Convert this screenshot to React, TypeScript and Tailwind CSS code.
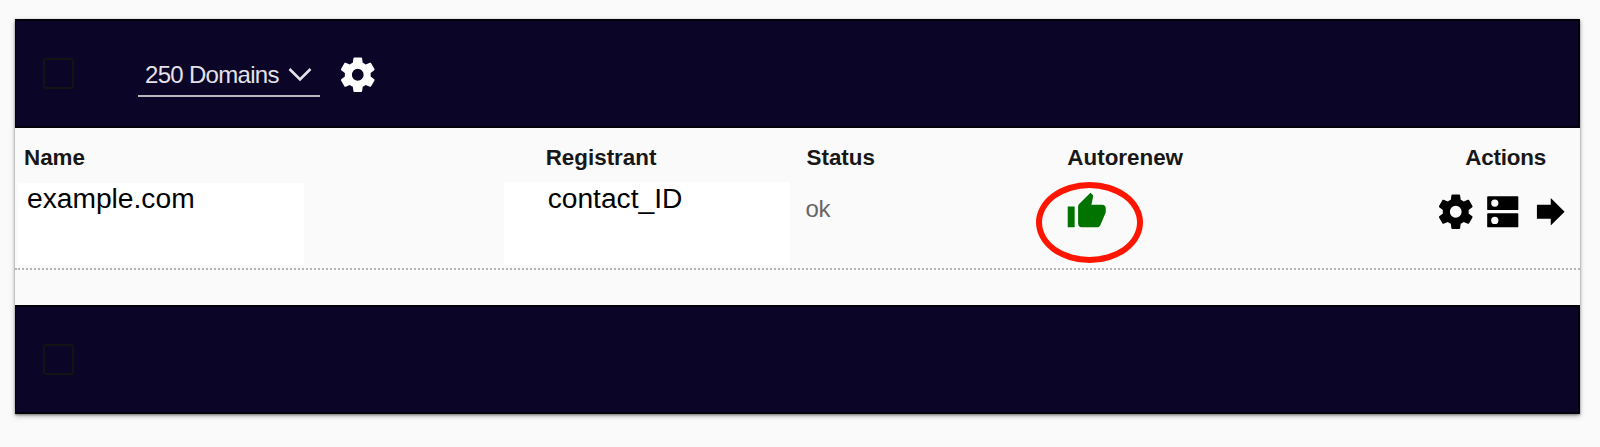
import { MdForward, MdThumbUp } from "react-icons/md";

function Cog({ className }: { className?: string }) {
  return (
    <svg className={className} viewBox="0 0 24 24" fill="currentColor">
      <path d="M12 15.4A3.4 3.4 0 0 1 8.6 12 3.4 3.4 0 0 1 12 8.6a3.4 3.4 0 0 1 3.4 3.4 3.4 3.4 0 0 1-3.4 3.4m7.43-2.43c.04-.32.07-.64.07-.97s-.03-.66-.07-1l2.11-1.63c.19-.15.24-.42.12-.64l-2-3.46c-.12-.22-.39-.31-.61-.22l-2.49 1c-.52-.39-1.06-.73-1.69-.98l-.37-2.65A.506.506 0 0 0 14 2h-4c-.25 0-.46.18-.5.42l-.37 2.65c-.63.25-1.17.59-1.69.98l-2.49-1c-.22-.09-.49 0-.61.22l-2 3.46c-.13.22-.07.49.12.64L4.57 11c-.04.34-.07.67-.07 1s.03.65.07.97l-2.11 1.66c-.19.15-.25.42-.12.64l2 3.46c.12.22.39.3.61.22l2.49-1.01c.52.4 1.06.74 1.69.99l.37 2.65c.04.24.25.42.5.42h4c.25 0 .46-.18.5-.42l.37-2.65c.63-.26 1.17-.59 1.69-.99l2.49 1.01c.22.08.49 0 .61-.22l2-3.46c.12-.22.07-.49-.12-.64z" />
    </svg>
  );
}

function Servers({ className }: { className?: string }) {
  return (
    <svg className={className} viewBox="0 0 24 24" fill="currentColor">
      <path d="M7.4 9.1a2.1 2.1 0 1 1 0-4.2 2.1 2.1 0 0 1 0 4.2M20.5 3h-17a.5.5 0 0 0-.5.5v7a.5.5 0 0 0 .5.5h17a.5.5 0 0 0 .5-.5v-7a.5.5 0 0 0-.5-.5M7.4 19.1a2.1 2.1 0 1 1 0-4.2 2.1 2.1 0 0 1 0 4.2M20.5 12.8h-17a.5.5 0 0 0-.5.5v7.2a.5.5 0 0 0 .5.5h17a.5.5 0 0 0 .5-.5v-7.2a.5.5 0 0 0-.5-.5" />
    </svg>
  );
}

function Toolbar({ children }: { children?: React.ReactNode }) {
  return (
    <div className="flex h-[109px] items-center border-2 border-l border-[#030109] bg-[#0b0528]">
      <div className="ml-[27px] h-[31px] w-[31px] rounded-[3px] border-2 border-[#131313]" />
      {children}
    </div>
  );
}

export default function App() {
  return (
    <div className="h-[447px] bg-[#fafafa] pt-[19px] pl-[15px] font-['Liberation_Sans',Arial,sans-serif] text-black">
      <div className="w-[1565px] shadow-[0_2px_5px_rgba(0,0,0,0.3),0_1px_2px_rgba(0,0,0,0.35)]">
        <Toolbar>
          <div className="mt-[3px] ml-[64px] flex h-11 w-[182px] items-center border-b-2 border-[#b9b7bb] pt-[2px] pl-[7px] text-[#e4e2e8]">
            <span className="w-[135px] text-2xl font-light tracking-[-0.7px] whitespace-nowrap">250 Domains</span>
            <svg className="ml-2 h-[14px] w-6" viewBox="0 0 24 14" fill="none" stroke="currentColor" strokeWidth="2.6">
              <path d="M1.5 1 12 11.5 22.5 1" />
            </svg>
          </div>
          <Cog className="mt-[2px] ml-[17px] size-[41.5px] text-white" />
        </Toolbar>

        <div className="h-[177px] bg-[#fafafa]">
          <div className="grid h-[54px] grid-cols-6 pt-[14px] text-[22.4px] leading-8 font-bold text-[#171717]">
            <div className="col-span-2 pl-[9px]">Name</div>
            <div className="pl-[9px]">Registrant</div>
            <div className="pl-[9px]">Status</div>
            <div className="pl-[9px]">Autorenew</div>
            <div className="pr-[34px] text-right tracking-[-0.2px]">Actions</div>
          </div>

          <div className="grid h-[88px] grid-cols-6 border-b-2 border-dotted border-[#b5b5b5]">
            <div className="col-span-2 pl-[3px]">
              <div className="mt-px h-[82px] w-[286px] bg-white pl-[9px] text-[28.2px] leading-[31px]">example.com</div>
            </div>
            <div>
              <div className="-ml-[33px] h-[83px] w-[286px] bg-white pl-11 text-[28.2px] leading-[33px]">contact_ID</div>
            </div>
            <div className="pt-[11px] pl-2 text-2xl font-light tracking-[-0.4px] text-[#666]">ok</div>
            <div className="relative pt-[9px] pl-2">
              <MdThumbUp className="size-[41.5px] text-[#017301]" />
              {/* highlight ring over the icon */}
              <div className="absolute top-0 -left-[22px] h-[81px] w-[107px] rounded-[50%] border-[6px] border-[#ff1500]" />
            </div>
            <div className="flex justify-end gap-[6px] pt-[9px] pr-[9px]">
              <Cog className="size-[41.5px]" />
              <Servers className="size-[41.5px]" />
              <MdForward className="size-[41.5px]" />
            </div>
          </div>
        </div>

        <Toolbar />
      </div>
    </div>
  );
}
